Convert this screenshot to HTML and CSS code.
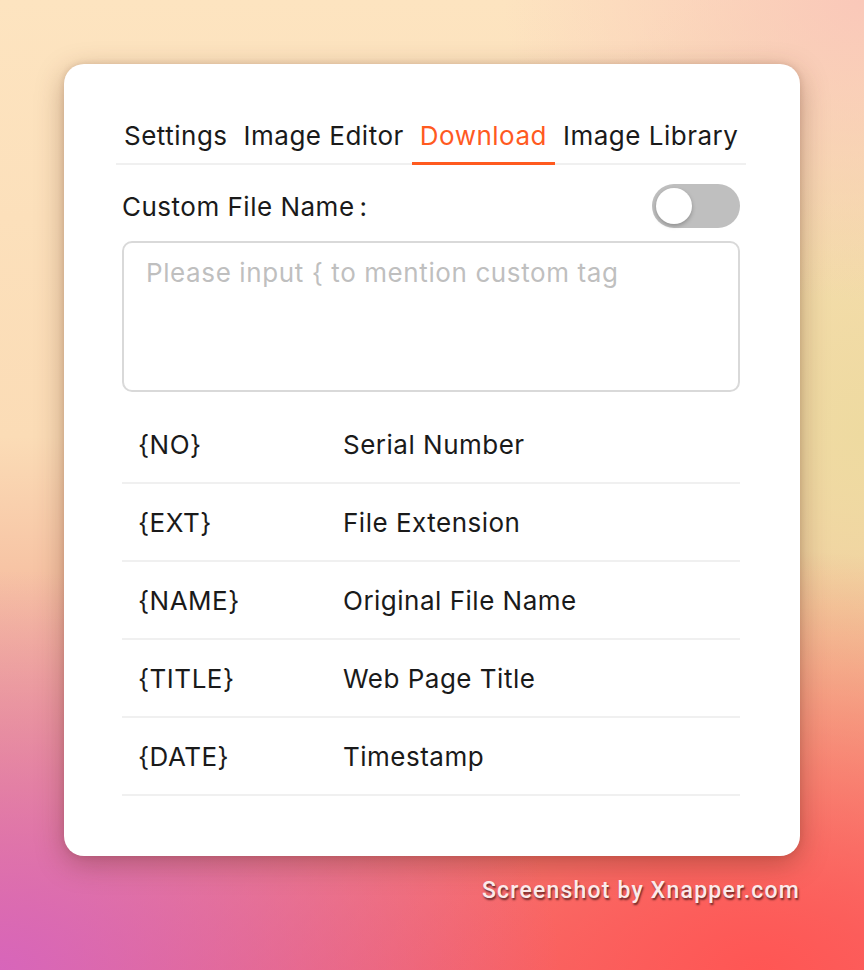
FILE: index.html
```html
<!DOCTYPE html>
<html lang="en">
<head>
<meta charset="utf-8">
<title>Download settings</title>
<link rel="stylesheet" href="styles.css">
</head>
<body>
<div class="stage">
  <div class="card">
    <div class="tabs">
      <div class="tab">Settings</div>
      <div class="tab">Image Editor</div>
      <div class="tab active">Download</div>
      <div class="tab">Image Library</div>
    </div>
    <div class="field-row">
      <span class="label">Custom File Name<span class="colon">:</span></span>
      <span class="switch"><span class="knob"></span></span>
    </div>
    <div class="textarea"><span class="placeholder">Please input { to mention custom tag</span></div>
    <div class="table">
      <div class="row"><span class="tag">{NO}</span><span class="desc">Serial Number</span></div>
      <div class="row"><span class="tag">{EXT}</span><span class="desc">File Extension</span></div>
      <div class="row"><span class="tag">{NAME}</span><span class="desc">Original File Name</span></div>
      <div class="row"><span class="tag">{TITLE}</span><span class="desc">Web Page Title</span></div>
      <div class="row"><span class="tag">{DATE}</span><span class="desc">Timestamp</span></div>
    </div>
  </div>
  <div class="credit">Screenshot by Xnapper.com</div>
</div>
</body>
</html>
```
FILE: styles.css
```css
html, body {
  margin: 0;
  padding: 0;
}
body {
  width: 864px;
  height: 970px;
  overflow: hidden;
  font-family: Inter, "Noto Sans", sans-serif;
  background:
    radial-gradient(ellipse 560px 400px at 0% 100%, rgba(214,100,190,0.95), rgba(214,100,190,0) 100%),
    radial-gradient(ellipse 700px 420px at 88% 100%, rgba(255,86,84,1), rgba(255,86,84,0) 100%),
    radial-gradient(ellipse 360px 300px at 100% 0%, rgba(250,200,185,1), rgba(250,200,185,0) 100%),
    radial-gradient(ellipse 380px 500px at 100% 45%, rgba(238,218,160,1), rgba(238,218,160,0) 100%),
    linear-gradient(180deg, #fde4c0 0%, #fbdcb6 45%, #f2a890 75%, #ee7a78 100%);
}
.stage {
  padding: 64px 64px 0 64px;
  display: flex;
  flex-direction: column;
}
.card {
  width: 736px;
  height: 792px;
  box-sizing: border-box;
  background: #fff;
  border-radius: 20px;
  box-shadow: 0 8px 28px rgba(90, 40, 20, 0.35), 0 0 6px rgba(90, 40, 20, 0.15);
  padding: 48px 60px 0 58px;
}
.tabs {
  display: flex;
  margin: 0 -6px;
  border-bottom: 2px solid #f0f0f0;
  height: 51px;
}
.tab {
  padding: 0 8px;
  font-size: 26px;
  line-height: 48px;
  color: #1a1a1a;
  letter-spacing: 0.5px;
  white-space: nowrap;
  border-bottom: 3px solid transparent;
  margin-bottom: -2px;
}
.tab.active {
  color: #ff5a1f;
  border-bottom-color: #ff5a1f;
}
.field-row {
  display: flex;
  justify-content: space-between;
  align-items: center;
  margin-top: 19px;
  height: 44px;
}
.label {
  font-size: 26px;
  color: #1a1a1a;
  letter-spacing: 0.5px;
}
.colon {
  margin-left: 5px;
}
.switch {
  width: 88px;
  height: 44px;
  border-radius: 22px;
  background: #bfbfbf;
  position: relative;
}
.knob {
  position: absolute;
  left: 4px;
  top: 4px;
  width: 36px;
  height: 36px;
  border-radius: 50%;
  background: #fff;
  box-shadow: 0 2px 4px rgba(0,0,0,0.25);
}
.textarea {
  margin-top: 13px;
  height: 151px;
  box-sizing: border-box;
  border: 2px solid #d9d9d9;
  border-radius: 10px;
  padding: 14px 22px;
}
.placeholder {
  font-size: 26px;
  line-height: 32px;
  color: #bfbfbf;
  letter-spacing: 0.6px;
}
.table {
  margin-top: 14px;
}
.row {
  display: flex;
  align-items: center;
  height: 78px;
  box-sizing: border-box;
  border-bottom: 2px solid #f0f0f0;
  font-size: 26px;
  color: #1a1a1a;
  letter-spacing: 0.5px;
}
.tag {
  width: 205px;
  box-sizing: border-box;
  padding-left: 16px;
}
.desc {
  padding-left: 16px;
}
.credit {
  align-self: flex-end;
  margin-top: 21px;
  font-family: Roboto, "Noto Sans", sans-serif;
  font-weight: 500;
  font-size: 23px;
  letter-spacing: 1.2px;
  color: #fbeaea;
  text-shadow: 1px 2px 2px rgba(60, 20, 20, 0.75);
}
```
